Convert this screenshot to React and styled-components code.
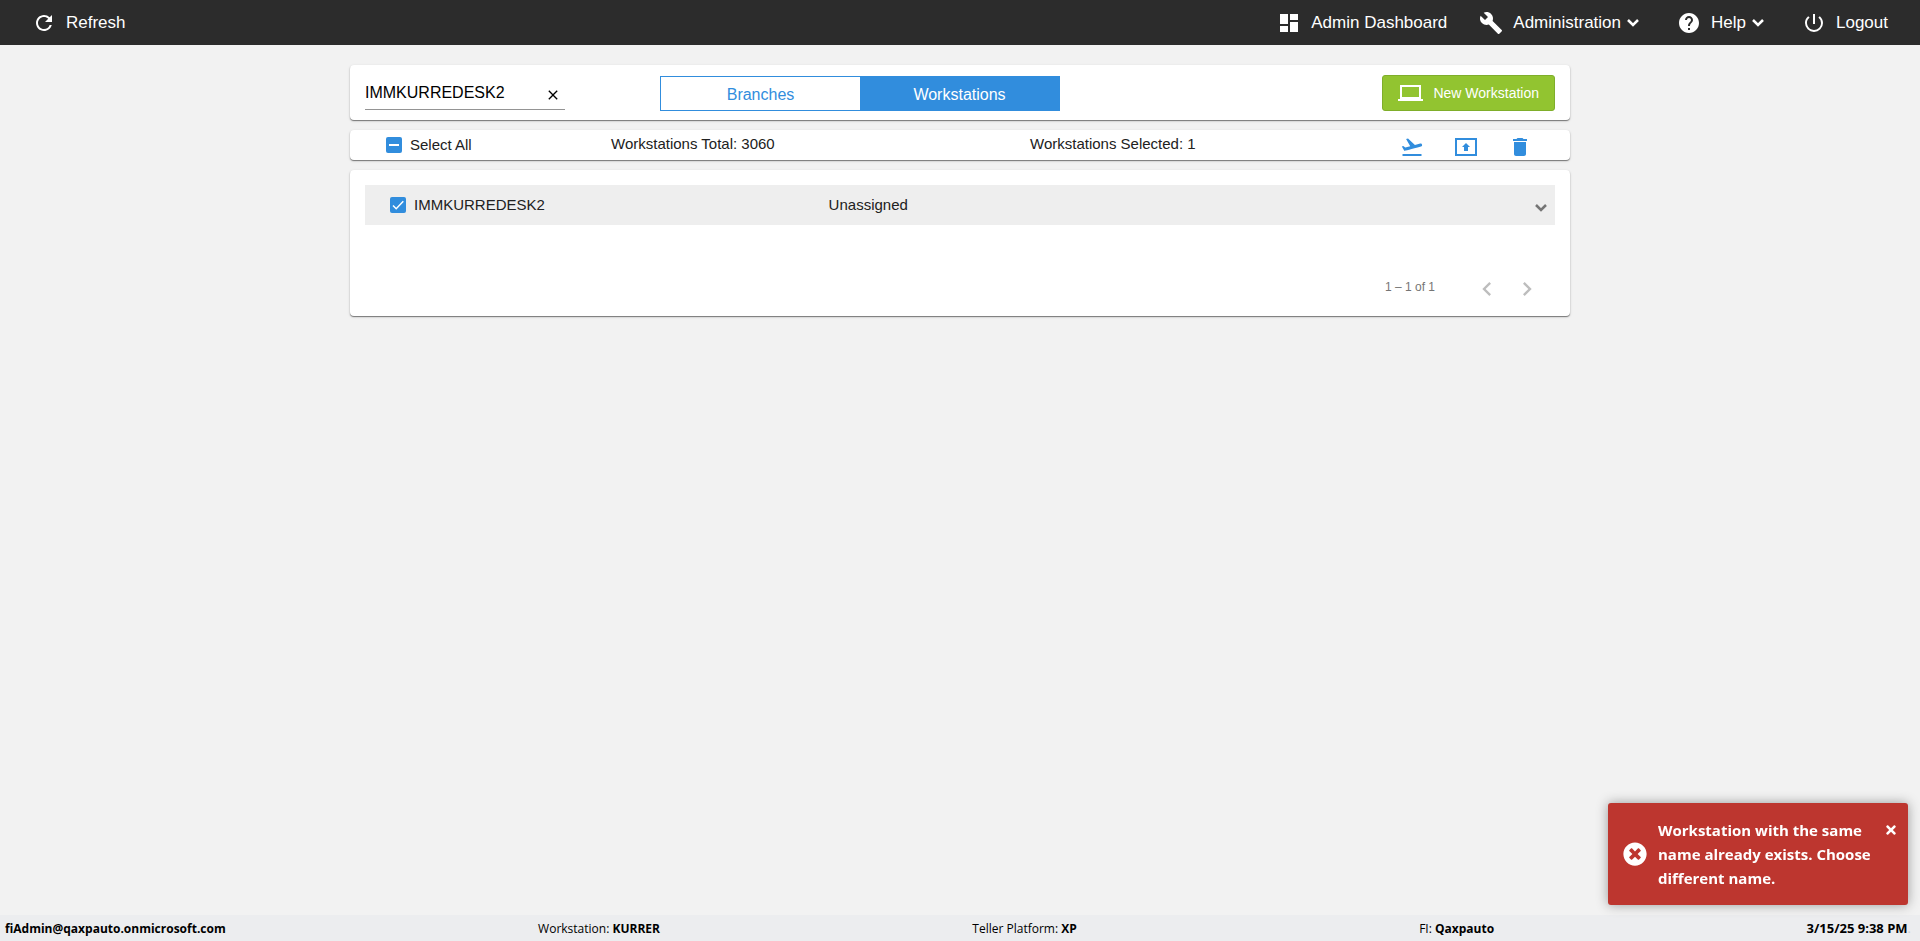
import React, { useEffect, useRef, useState } from "react";

import styled, { createGlobalStyle, css } from "styled-components";
import {
  MdRefresh,
  MdDashboard,
  MdBuild,
  MdHelp,
  MdPowerSettingsNew,
  MdClose,
  MdFlightTakeoff,
  MdDelete,
  MdChevronLeft,
  MdChevronRight,
} from "react-icons/md";
import { FaTimes, FaTimesCircle } from "react-icons/fa";

const blue = "#318ddd";

const GlobalStyle = createGlobalStyle`
  * {
    box-sizing: border-box;
  }
  body {
    margin: 0;
    background-color: #f2f2f2;
    font-family: Arial, "Liberation Sans", sans-serif;
    color: #212121;
  }
  button, input {
    font-family: inherit;
    margin: 0;
  }
  svg {
    display: block;
    flex-shrink: 0;
  }
`;

const Page = styled.div`
  min-height: 100vh;
  display: flex;
  flex-direction: column;
`;

const Header = styled.header`
  height: 45px;
  padding: 0 32px;
  display: flex;
  align-items: center;
  justify-content: space-between;
  background-color: #2c2c2c;
`;

const Nav = styled.nav`
  display: flex;
  gap: 32px;
`;

const NavButton = styled.button`
  display: flex;
  align-items: center;
  padding: 0;
  border: none;
  background: none;
  color: #fff;
  font-size: 17px;
  line-height: 24px;
  text-decoration: none;
  cursor: pointer;
`;

const NavText = styled.span`
  margin-left: 10px;
`;

const Main = styled.main`
  flex: 1;
  width: 100%;
  max-width: 1220px;
  margin: 0 auto;
  padding: 20px 0;
  display: flex;
  flex-direction: column;
  gap: 10px;
`;

const Card = styled.section`
  background-color: #fff;
  border-radius: 4px;
  box-shadow: 0 1px 1px rgba(0, 0, 0, 0.45), 0 1px 3px rgba(0, 0, 0, 0.15);
`;

const Toolbar = styled(Card)`
  display: flex;
  align-items: flex-end;
  padding: 10px 15px 9px;
`;

const Search = styled.div`
  width: 200px;
  height: 35px;
  display: flex;
  align-items: center;
  border-bottom: 1px solid #949494;
  margin-bottom: 1px;
`;

const SearchInput = styled.input`
  flex: 1;
  min-width: 0;
  padding: 2px 0 0;
  border: none;
  outline: none;
  background: none;
  color: #000;
  font-size: 16px;
  line-height: 24px;
`;

const IconButton = styled.button`
  display: flex;
  padding: 0;
  border: none;
  background: none;
  color: ${({ $color }) => $color || "inherit"};
  cursor: pointer;
`;

const ClearButton = styled(IconButton)`
  padding: 5px 4px 0;
`;

const Tabs = styled.div`
  display: flex;
  width: 400px;
  height: 35px;
  margin-left: 95px;
  border: 1px solid ${blue};
`;

const Tab = styled.button`
  flex: 1;
  padding: 2px 0 0;
  border: none;
  font-size: 16px;
  cursor: pointer;
  color: ${({ $active }) => ($active ? "#fff" : blue)};
  background-color: ${({ $active }) => ($active ? blue : "#fff")};
`;

const NewButton = styled.button`
  display: flex;
  align-items: center;
  gap: 10px;
  height: 36px;
  margin-left: auto;
  padding: 0 15px;
  border: 1px solid #7fae2a;
  border-radius: 3px;
  background-color: #92c430;
  color: #fff;
  font-size: 14px;
  cursor: pointer;
`;

const SelectionBar = styled(Card)`
  display: grid;
  grid-template-columns: 225fr 419fr 370fr auto;
  align-items: center;
  height: 30px;
  padding: 0 38px 0 36px;
  font-size: 15px;
  line-height: 20px;
`;

const Stat = styled.span`
  padding-bottom: 2px;
`;

const Actions = styled.div`
  display: flex;
  gap: 30px;
  padding-top: 4px;
`;

const CheckLabel = styled.label`
  display: flex;
  align-items: center;
  gap: 8px;
  cursor: pointer;
`;

const tick = css`
  background-image: url("data:image/svg+xml,%3Csvg xmlns='http://www.w3.org/2000/svg' viewBox='0 0 16 16'%3E%3Cpath d='M3 8.5l3.2 3.2L13.3 4.3' fill='none' stroke='white' stroke-width='1.5'/%3E%3C/svg%3E");
`;

const dash = css`
  background-image: url("data:image/svg+xml,%3Csvg xmlns='http://www.w3.org/2000/svg' viewBox='0 0 16 16'%3E%3Cpath d='M3 8h10' stroke='white' stroke-width='2'/%3E%3C/svg%3E");
`;

const CheckInput = styled.input`
  appearance: none;
  width: 16px;
  height: 16px;
  border: 2px solid #757575;
  border-radius: 2px;
  cursor: pointer;
  &:checked,
  &:indeterminate {
    border: none;
    background-color: ${blue};
  }
  &:checked {
    ${tick}
  }
  &:indeterminate {
    ${dash}
  }
`;

const ListCard = styled(Card)`
  padding: 15px 15px 7px;
`;

const List = styled.ul`
  min-height: 79px;
  margin: 0;
  padding: 0;
  list-style: none;
`;

const Row = styled.li`
  display: grid;
  grid-template-columns: 439fr 701fr auto;
  align-items: center;
  height: 40px;
  padding: 0 2px 0 25px;
  background-color: #eee;
  font-size: 15px;
  line-height: 20px;
`;

const RowToggle = styled(IconButton)`
  padding-top: 5px;
`;

const Paginator = styled.div`
  display: flex;
  align-items: center;
  justify-content: flex-end;
  height: 45px;
  padding-right: 14px;
  color: #757575;
  font-size: 12px;
`;

const PageRange = styled.span`
  margin-right: 38px;
`;

const PageButtons = styled.div`
  display: flex;
  gap: 12px;
  padding-top: 4px;
`;

const Toast = styled.div`
  position: fixed;
  right: 12px;
  bottom: 36px;
  width: 300px;
  padding: 15px 10px 15px 15px;
  display: flex;
  align-items: center;
  gap: 11px;
  border-radius: 3px;
  background-color: #bd362f;
  box-shadow: 0 0 12px #999;
  color: #fff;
  font-family: "Segoe UI", "Open Sans", sans-serif;
`;

const ToastText = styled.p`
  flex: 1;
  margin: 0;
  font-size: 15px;
  font-weight: 700;
  line-height: 24px;
`;

const ToastClose = styled(IconButton)`
  align-self: flex-start;
  padding-top: 5px;
`;

const Footer = styled.footer`
  display: flex;
  align-items: center;
  justify-content: space-between;
  height: 26px;
  padding: 0 9px 0 5px;
  background-color: #ecedef;
  color: #000;
  font-family: "Segoe UI", "Open Sans", sans-serif;
  font-size: 12px;
`;

const Platform = styled.span`
  margin-right: 30px;
`;

const Clock = styled.span`
  font-size: 13px;
`;

const Faint = styled.span`
  color: #ccc;
`;

const Checkbox = ({ label, partial, checked, onChange }) => {
  const ref = useRef(null);

  useEffect(() => {
    ref.current.indeterminate = !!partial;
  }, [partial]);

  return (
    <CheckLabel>
      <CheckInput
        ref={ref}
        type="checkbox"
        checked={checked}
        onChange={onChange}
      />
      {label}
    </CheckLabel>
  );
};

const ChevronDown = () => (
  <svg width="24" height="24" viewBox="0 0 24 24" fill="none">
    <path d="M7 9l5 5 5-5" stroke="currentColor" strokeWidth="2.5" />
  </svg>
);

const LaptopIcon = () => (
  <svg width="25" height="24" viewBox="0 0 25 24" fill="none">
    <path d="M3 5h19v12H3z" stroke="currentColor" strokeWidth="2" />
    <path d="M0 18h25v2H0z" fill="currentColor" />
  </svg>
);

const PresentIcon = () => (
  <svg width="24" height="24" viewBox="0 0 24 24" fill="none">
    <path d="M2 4h20v16H2z" stroke="currentColor" strokeWidth="2" />
    <path d="M10 16v-4H8l4-4 4 4h-2v4z" fill="currentColor" />
  </svg>
);

const NavItem = ({ icon: Icon, text, menu }) => (
  <NavButton type="button" aria-haspopup={menu ? "menu" : undefined}>
    <Icon size={24} />
    <NavText>{text}</NavText>
    {menu && <ChevronDown />}
  </NavButton>
);

const App = () => {
  const [query, setQuery] = useState("IMMKURREDESK2");
  const [tab, setTab] = useState("Workstations");
  const [selected, setSelected] = useState(true);
  const [toast, setToast] = useState(true);

  return (
    <>
      <GlobalStyle />
      <Page>
        <Header>
          <NavItem icon={MdRefresh} text="Refresh" />
          <Nav>
            <NavButton as="a" href="#dashboard">
              <MdDashboard size={24} />
              <NavText>Admin Dashboard</NavText>
            </NavButton>
            <NavItem icon={MdBuild} text="Administration" menu />
            <NavItem icon={MdHelp} text="Help" menu />
            <NavItem icon={MdPowerSettingsNew} text="Logout" />
          </Nav>
        </Header>

        <Main>
          <Toolbar>
            <Search>
              <SearchInput
                type="text"
                aria-label="Search"
                value={query}
                onChange={(e) => setQuery(e.target.value)}
              />
              <ClearButton
                type="button"
                aria-label="Clear"
                $color="#000"
                onClick={() => setQuery("")}
              >
                <MdClose size={16} />
              </ClearButton>
            </Search>
            <Tabs>
              {["Branches", "Workstations"].map((name) => (
                <Tab
                  key={name}
                  type="button"
                  $active={tab === name}
                  onClick={() => setTab(name)}
                >
                  {name}
                </Tab>
              ))}
            </Tabs>
            <NewButton type="button">
              <LaptopIcon />
              New Workstation
            </NewButton>
          </Toolbar>

          <SelectionBar>
            <Checkbox
              label="Select All"
              partial={selected}
              checked={false}
              onChange={() => setSelected(!selected)}
            />
            <Stat>Workstations Total: 3060</Stat>
            <Stat>Workstations Selected: {selected ? 1 : 0}</Stat>
            <Actions>
              <IconButton type="button" aria-label="Deploy" $color={blue}>
                <MdFlightTakeoff size={24} />
              </IconButton>
              <IconButton type="button" aria-label="Update" $color={blue}>
                <PresentIcon />
              </IconButton>
              <IconButton type="button" aria-label="Delete" $color={blue}>
                <MdDelete size={24} />
              </IconButton>
            </Actions>
          </SelectionBar>

          <ListCard>
            <List>
              <Row>
                <Checkbox
                  label="IMMKURREDESK2"
                  checked={selected}
                  onChange={() => setSelected(!selected)}
                />
                <span>Unassigned</span>
                <RowToggle type="button" aria-label="Expand" $color="#757575">
                  <ChevronDown />
                </RowToggle>
              </Row>
            </List>
            <Paginator>
              <PageRange>1 – 1 of 1</PageRange>
              <PageButtons>
                <IconButton type="button" aria-label="Previous page" $color="#bdbdbd">
                  <MdChevronLeft size={28} />
                </IconButton>
                <IconButton type="button" aria-label="Next page" $color="#bdbdbd">
                  <MdChevronRight size={28} />
                </IconButton>
              </PageButtons>
            </Paginator>
          </ListCard>
        </Main>

        <Footer>
          <b>fiAdmin@qaxpauto.onmicrosoft.com</b>
          <span>
            Workstation: <b>KURRER</b>
          </span>
          <Platform>
            Teller Platform: <b>XP</b>
          </Platform>
          <span>
            FI: <b>Qaxpauto</b>
          </span>
          <Clock>
            <b>3/15/25 9:38 PM</b>
            <Faint>.</Faint>
          </Clock>
        </Footer>
      </Page>

      {toast && (
        <Toast role="alert">
          <FaTimesCircle size={24} />
          <ToastText>
            Workstation with the same name already exists. Choose different name.
          </ToastText>
          <ToastClose
            type="button"
            aria-label="Close"
            onClick={() => setToast(false)}
          >
            <FaTimes size={14} />
          </ToastClose>
        </Toast>
      )}
    </>
  );
};

export default App;
